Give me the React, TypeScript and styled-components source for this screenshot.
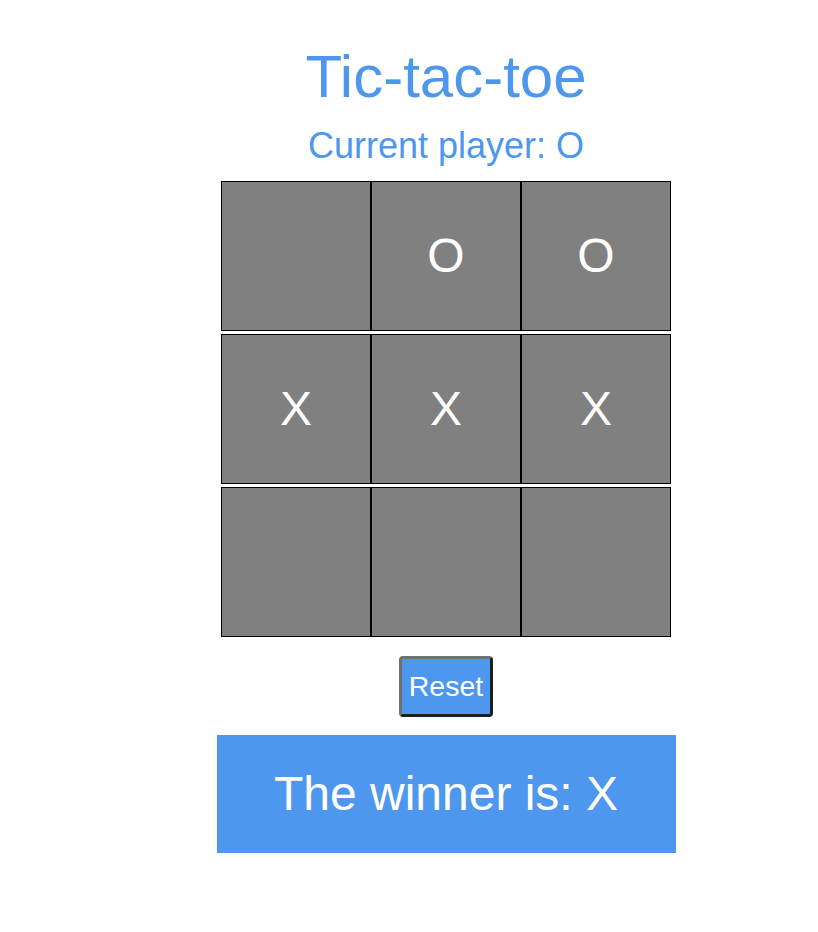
import * as React from "react";
import styled, { createGlobalStyle } from "styled-components";

type Mark = "X" | "O" | null;

const board: Mark[][] = [
  [null, "O", "O"],
  ["X", "X", "X"],
  [null, null, null],
];

const GlobalStyle = createGlobalStyle`
  body {
    margin: 8px;
    background: #ffffff;
    font-family: "Liberation Sans", Arial, sans-serif;
  }
`;

const App: React.FC = () => {
  return (
    <>
      <GlobalStyle />
      <Page>
        <Title>Tic-tac-toe</Title>
        <Status>Current player: O</Status>
        <Board>
          {board.map((row, r) => (
            <Row key={r}>
              {row.map((mark, c) => (
                <Cell key={c}>{mark}</Cell>
              ))}
            </Row>
          ))}
        </Board>
        <ResetButton>Reset</ResetButton>
        <Winner>The winner is: X</Winner>
      </Page>
    </>
  );
};

export default App;

const Page = styled.div`
  display: flex;
  flex-direction: column;
  align-items: center;
  padding-top: 34px;
  padding-left: 74px;
`;

const Title = styled.h1`
  margin: 0;
  font-size: 60px;
  font-weight: 400;
  color: #4e97ee;
`;

const Status = styled.h2`
  margin: 14px 0 0;
  font-size: 36px;
  font-weight: 400;
  color: #4e97ee;
`;

const Board = styled.div`
  display: flex;
  flex-direction: column;
  gap: 3px;
  margin-top: 14px;
`;

const Row = styled.div`
  display: flex;
`;

const Cell = styled.div`
  box-sizing: border-box;
  width: 150px;
  height: 150px;
  display: flex;
  align-items: center;
  justify-content: center;
  background: #808080;
  border: 1px solid #000000;
  color: #ffffff;
  font-size: 48px;
  padding-bottom: 2px;
`;

const ResetButton = styled.button`
  margin-top: 19px;
  padding: 11px 7px;
  background: #4e97ee;
  color: #ffffff;
  font-family: "Liberation Sans", Arial, sans-serif;
  font-size: 28.5px;
  border: 3px solid;
  border-color: #707070 #1e1e1e #1e1e1e #707070;
  border-radius: 4px;
  cursor: pointer;
`;

const Winner = styled.div`
  margin-top: 18px;
  width: 459px;
  height: 118px;
  display: flex;
  align-items: center;
  justify-content: center;
  background: #4e97ee;
  color: #ffffff;
  font-size: 48px;
  padding-bottom: 2px;
  box-sizing: border-box;
`;
